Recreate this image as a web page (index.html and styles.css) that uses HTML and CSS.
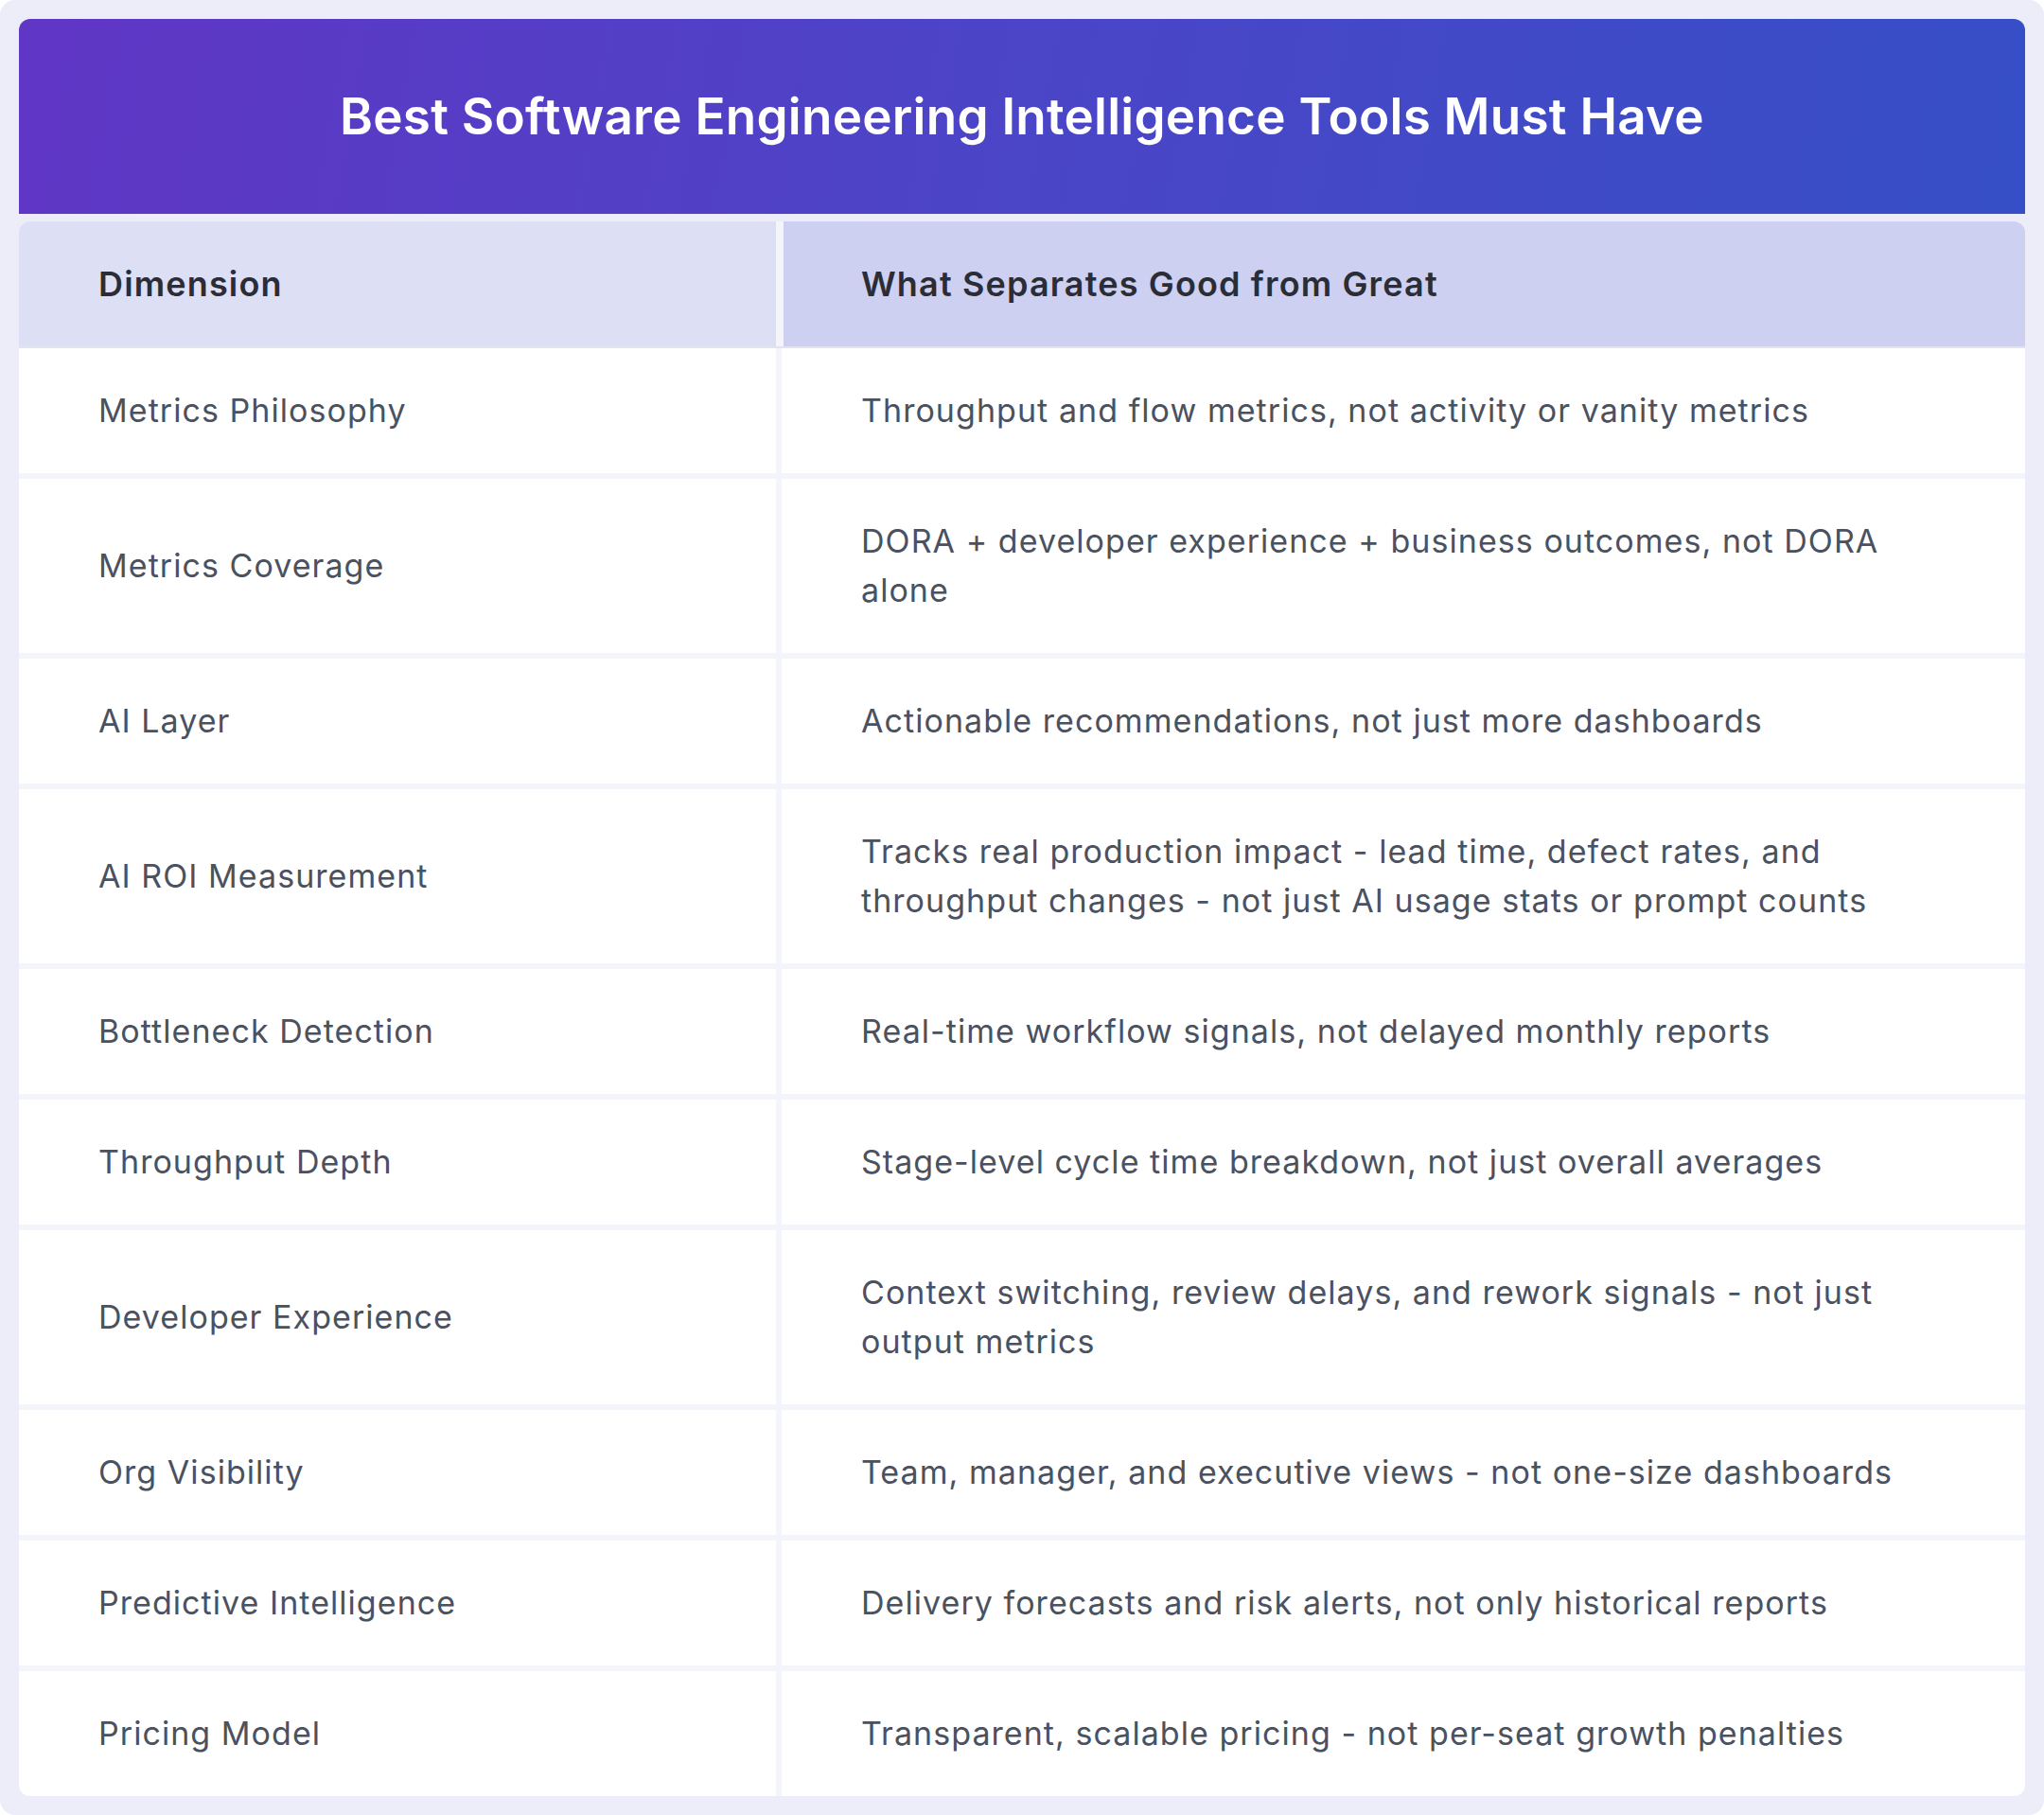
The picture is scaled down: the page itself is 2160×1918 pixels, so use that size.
FILE: index.html
```html
<!DOCTYPE html>
<html lang="en">
<head>
<meta charset="utf-8">
<title>Best Software Engineering Intelligence Tools Must Have</title>
<link rel="stylesheet" href="styles.css">
</head>
<body>
<div class="frame">
  <div class="card">
    <header class="banner">
      <h1 class="title">Best Software Engineering Intelligence Tools Must Have</h1>
    </header>
    <div class="table">
      <div class="thead">
        <div class="th th-dim">Dimension</div>
        <div class="th th-what">What Separates Good from Great</div>
      </div>
      <div class="tbody">
        <div class="row"><div class="cell">Metrics Philosophy</div><div class="cell">Throughput and flow metrics, not activity or vanity metrics</div></div>
        <div class="row"><div class="cell">Metrics Coverage</div><div class="cell">DORA + developer experience + business outcomes, not DORA alone</div></div>
        <div class="row"><div class="cell">AI Layer</div><div class="cell">Actionable recommendations, not just more dashboards</div></div>
        <div class="row"><div class="cell">AI ROI Measurement</div><div class="cell">Tracks real production impact - lead time, defect rates, and throughput changes - not just AI usage stats or prompt counts</div></div>
        <div class="row"><div class="cell">Bottleneck Detection</div><div class="cell">Real-time workflow signals, not delayed monthly reports</div></div>
        <div class="row"><div class="cell">Throughput Depth</div><div class="cell">Stage-level cycle time breakdown, not just overall averages</div></div>
        <div class="row"><div class="cell">Developer Experience</div><div class="cell">Context switching, review delays, and rework signals - not just output metrics</div></div>
        <div class="row"><div class="cell">Org Visibility</div><div class="cell">Team, manager, and executive views - not one-size dashboards</div></div>
        <div class="row"><div class="cell">Predictive Intelligence</div><div class="cell">Delivery forecasts and risk alerts, not only historical reports</div></div>
        <div class="row"><div class="cell">Pricing Model</div><div class="cell">Transparent, scalable pricing - not per-seat growth penalties</div></div>
      </div>
    </div>
  </div>
</div>
</body>
</html>
```

FILE: styles.css
```css
html, body {
  margin: 0;
  padding: 0;
  background: #ffffff;
}

body {
  font-family: "Inter", "Open Sans", "Liberation Sans", sans-serif;
}

.frame {
  background: #ecedf8;
  border-radius: 16px;
  padding: 20px;
  min-height: 1878px;
}

.card {
  display: flex;
  flex-direction: column;
  gap: 8px;
}

.banner {
  height: 206px;
  border-radius: 12px 12px 0 0;
  background: linear-gradient(100deg, #6036c5 0%, #4b45c7 50%, #364fc6 100%);
  display: flex;
  align-items: center;
  justify-content: center;
}

.title {
  margin: 0;
  color: #ffffff;
  font-size: 53px;
  font-weight: 600;
  letter-spacing: 0.25px;
}

.table {
  background: #f4f5fb;
  border-radius: 12px;
  overflow: hidden;
}

.thead {
  display: grid;
  grid-template-columns: 800px 1fr;
  column-gap: 8px;
  border-bottom: 2px solid #e2e3ef;
}

.th {
  padding: 40px 84px;
  line-height: 52px;
  font-size: 36px;
  font-weight: 600;
  letter-spacing: 1.15px;
  color: #2b2d36;
}

.th-dim {
  background: #dddff5;
}

.th-what {
  background: #cdd0f0;
  padding-left: 82px;
}

.tbody {
  display: flex;
  flex-direction: column;
  gap: 6px;
}

.row {
  display: grid;
  grid-template-columns: 800px 1fr;
  column-gap: 6px;
}

.cell {
  background: #ffffff;
  padding: 40px 84px;
  line-height: 52px;
  font-size: 34px;
  letter-spacing: 1.05px;
  color: #4a5160;
  display: flex;
  align-items: center;
}
```
